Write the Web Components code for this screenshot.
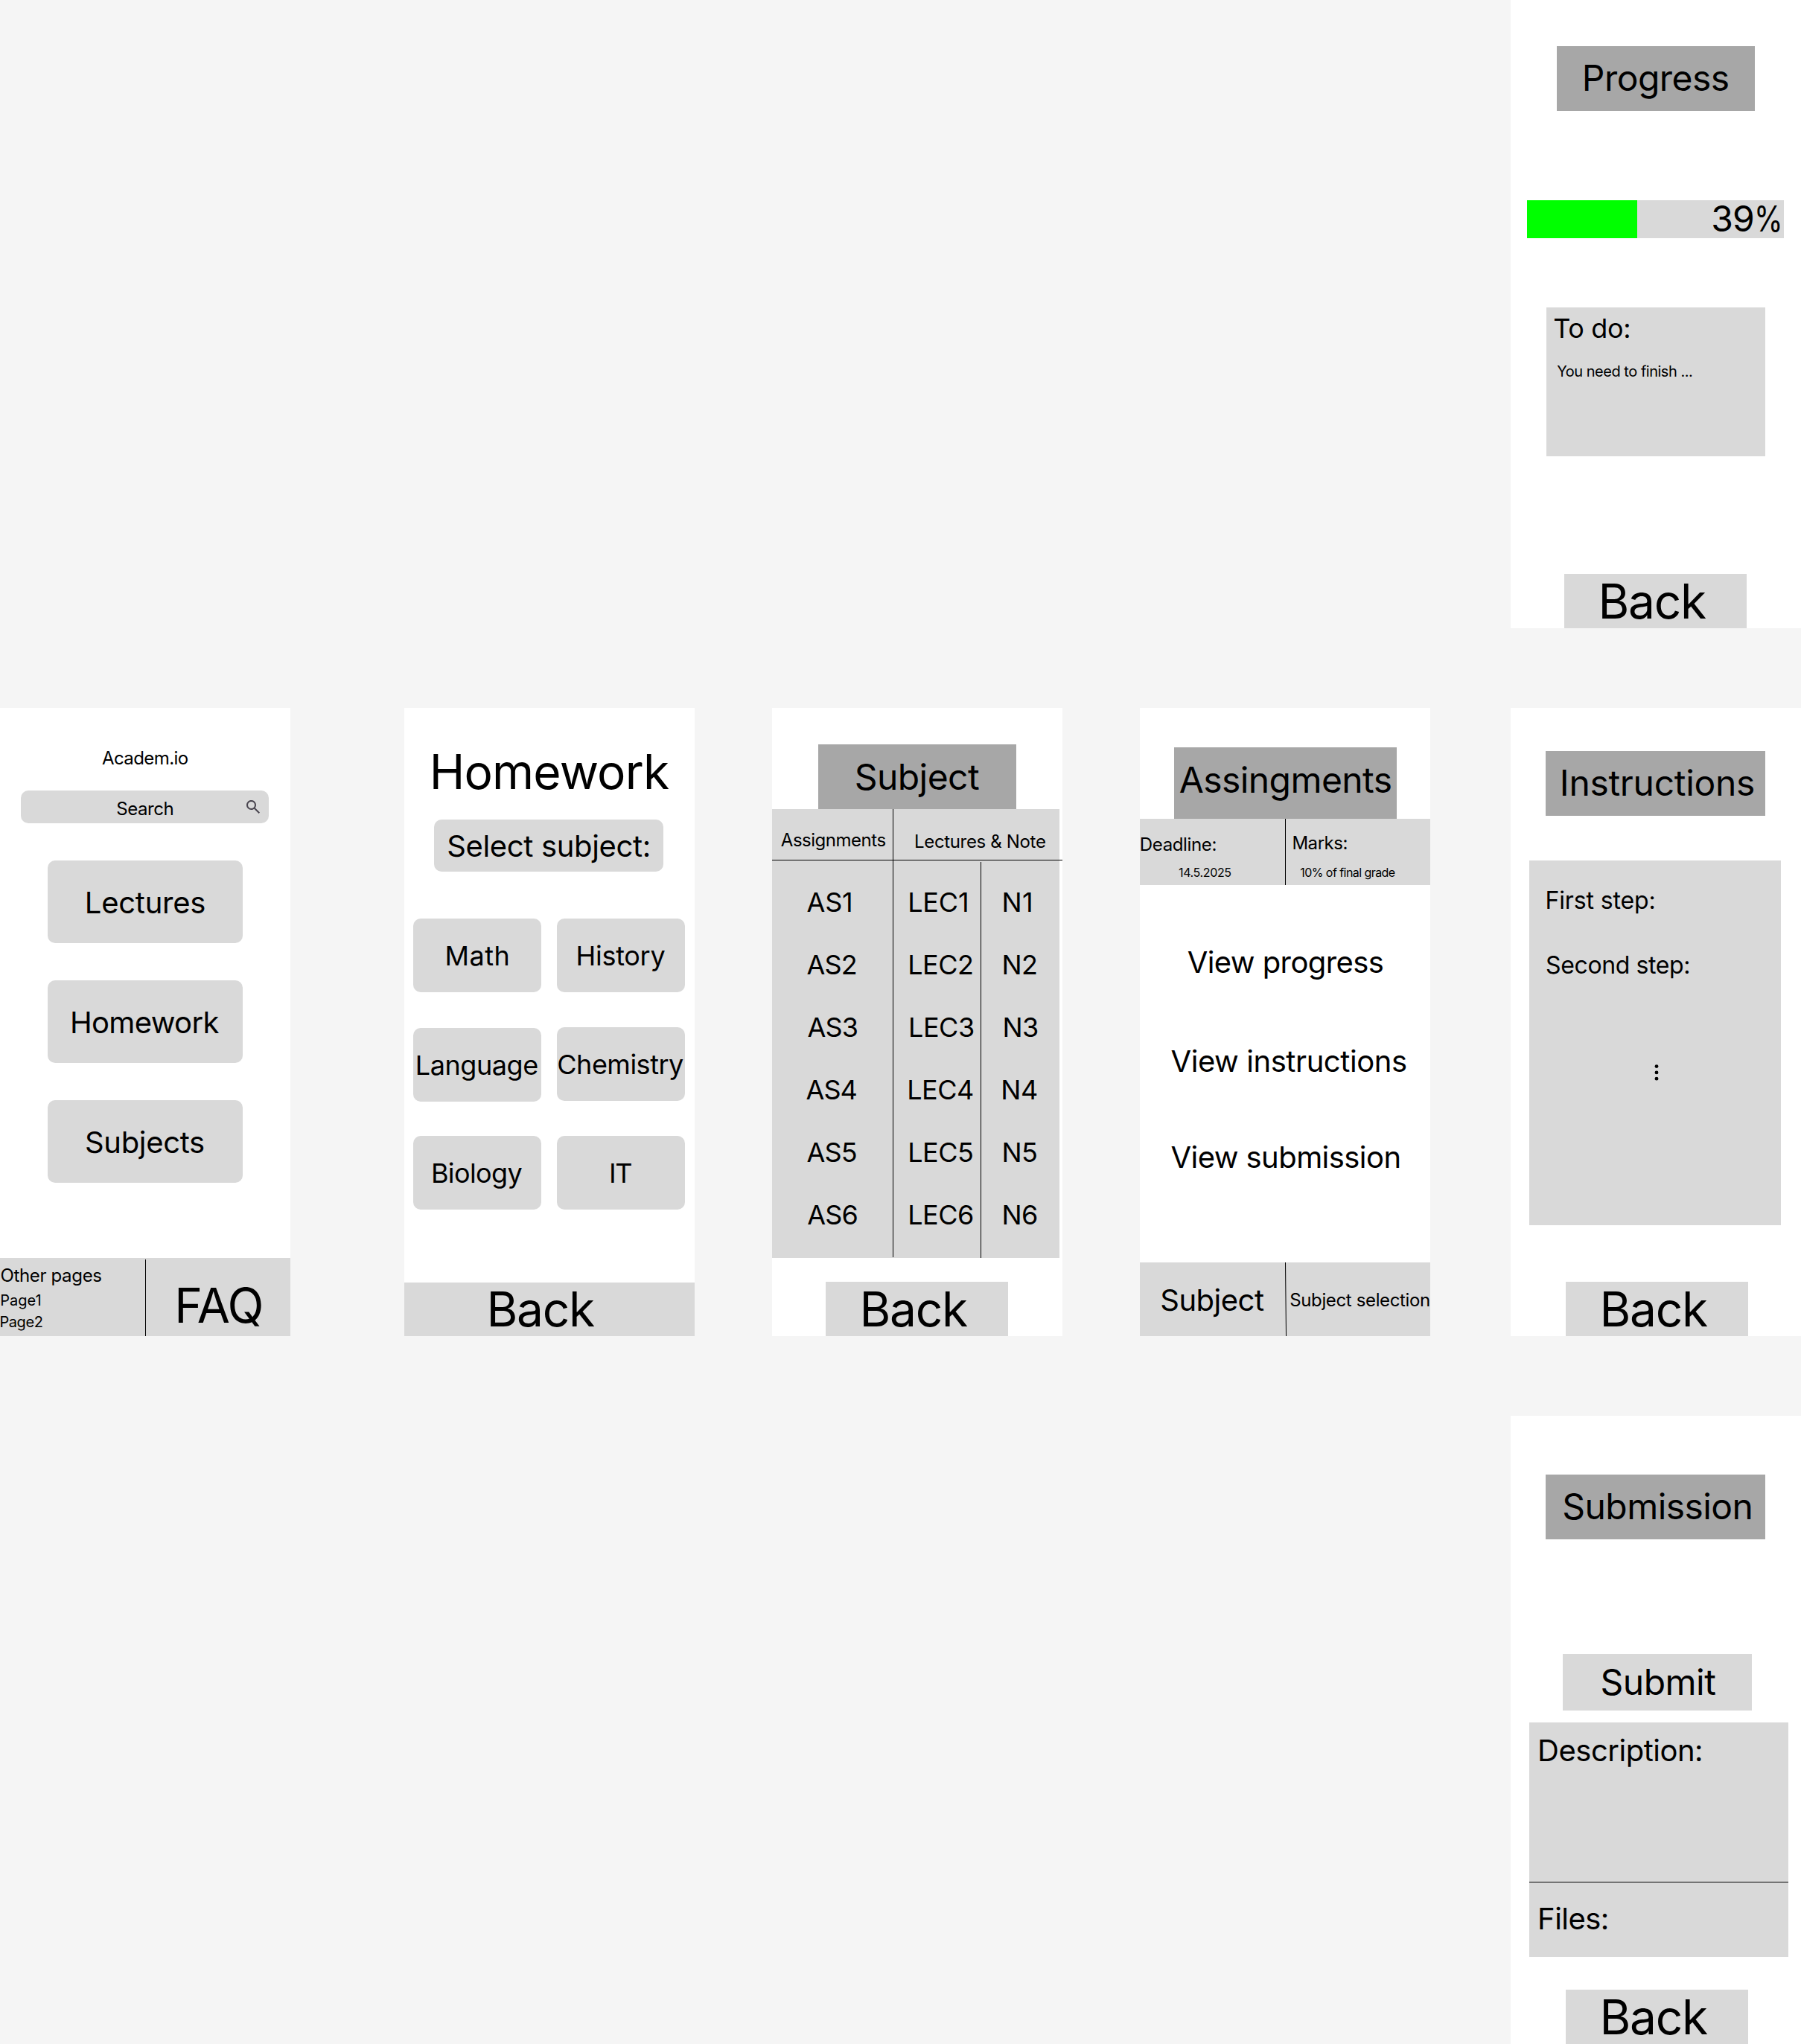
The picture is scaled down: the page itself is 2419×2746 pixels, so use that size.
<!DOCTYPE html>
<html lang="en">
<head>
<meta charset="utf-8">
<title>Academ.io wireframes</title>
<style>
  body { margin: 0; background: #f5f5f5; font-family: Inter, "Liberation Sans", sans-serif; color: #000; }
</style>
</head>
<body>
<wire-board></wire-board>
<script>
/* Layout numbers belong to one element only, so nested boxes must not inherit them */
for (const name of ['--w', '--h', '--t', '--l', '--b', '--s', '--k']) {
  CSS.registerProperty({ name, syntax: '<number>', inherits: false, initialValue: '0' });
}

const define = (name, html) => {
  const tpl = document.createElement('template');
  tpl.innerHTML = html;
  customElements.define(name, class extends HTMLElement {
    constructor() {
      super();
      this.attachShadow({ mode: 'open' }).append(tpl.content.cloneNode(true));
    }
  });
};

/* Text line: --s font size, --k tracking, --t / --l offset from the previous item */
define('wire-text', `<style>
  :host { display: block; flex: none; white-space: nowrap; line-height: normal;
    font-size: calc(var(--s) * 1px); letter-spacing: calc(var(--k) * 1px);
    margin: calc(var(--t) * 1px) 0 0 calc(var(--l) * 1px); }
</style><slot></slot>`);

/* Grey block: --w / --h size, --t / --l offset */
define('wire-box', `<style>
  :host { display: flex; flex-direction: column; align-items: flex-start; flex: none; box-sizing: border-box;
    background: #d9d9d9; width: calc(var(--w) * 1px); height: calc(var(--h) * 1px);
    margin: calc(var(--t) * 1px) 0 0 calc(var(--l) * 1px); }
  :host([row]) { flex-direction: row; }
  :host([round]) { border-radius: 10px; }
  :host([dark]) { background: #a7a7a7; }
  :host([clear]) { background: none; }
  :host([foot]) { margin-top: auto; }
</style><slot></slot>`);

/* Hairline */
define('wire-rule', `<style>
  :host { display: block; flex: none; background: #000; width: 1px; align-self: stretch;
    margin: calc(var(--t) * 1px) 0 calc(var(--b) * 1px); }
  :host([across]) { height: 1px; width: calc(var(--w) * 1px); align-self: flex-start; margin: 0; }
</style>`);

define('wire-screen', `<style>
  :host { display: flex; flex-direction: column; align-items: flex-start; background: #fff; width: 390px; height: 844px; }
</style><slot></slot>`);

define('back-button', `<style>
  :host { display: block; margin-top: auto; margin-left: calc(var(--l) * 1px); }
</style>
<wire-box style="--w:245;--h:73"><wire-text style="--s:64;--k:-1.26;--t:-2;--l:45.4">Back</wire-text></wire-box>`);

define('search-icon', `<style>:host { display: block; margin: 10px 9px 0 auto; width: 24px; height: 24px; } svg { display: block; }</style>
<svg width="24" height="24" viewBox="0 0 24 24"><path fill="#49454f" d="M19.6 21L13.3 14.7C12.8 15.1 12.225 15.4167 11.575 15.65C10.925 15.8833 10.2333 16 9.5 16C7.68333 16 6.14583 15.3708 4.8875 14.1125C3.62917 12.8542 3 11.3167 3 9.5C3 7.68333 3.62917 6.14583 4.8875 4.8875C6.14583 3.62917 7.68333 3 9.5 3C11.3167 3 12.8542 3.62917 14.1125 4.8875C15.3708 6.14583 16 7.68333 16 9.5C16 10.2333 15.8833 10.925 15.65 11.575C15.4167 12.225 15.1 12.8 14.7 13.3L21 19.6L19.6 21ZM9.5 14C10.75 14 11.8125 13.5625 12.6875 12.6875C13.5625 11.8125 14 10.75 14 9.5C14 8.25 13.5625 7.1875 12.6875 6.3125C11.8125 5.4375 10.75 5 9.5 5C8.25 5 7.1875 5.4375 6.3125 6.3125C5.4375 7.1875 5 8.25 5 9.5C5 10.75 5.4375 11.8125 6.3125 12.6875C7.1875 13.5625 8.25 14 9.5 14Z"/></svg>`);

define('more-dots', `<style>:host { display: block; margin: 113px 0 0 168.3px; } svg { display: block; }</style>
<svg width="6" height="24" viewBox="0 0 6 24"><circle cx="3" cy="3.6" r="2.4"/><circle cx="3" cy="11.9" r="2.4"/><circle cx="3" cy="20.2" r="2.4"/></svg>`);

define('home-screen', `<wire-screen>
  <wire-text style="--s:24;--k:-.57;--t:53;--l:136.9">Academ.io</wire-text>
  <wire-box row round style="--w:333;--h:44;--t:29;--l:28">
    <wire-text style="--s:24;--k:-.42;--t:10;--l:128.2">Search</wire-text><search-icon></search-icon>
  </wire-box>
  <wire-box round style="--w:262;--h:111;--t:50;--l:64"><wire-text style="--s:40;--k:-.26;--t:32;--l:49.8">Lectures</wire-text></wire-box>
  <wire-box round style="--w:262;--h:111;--t:50;--l:64"><wire-text style="--s:40;--k:-.64;--t:32;--l:29.9">Homework</wire-text></wire-box>
  <wire-box round style="--w:262;--h:111;--t:50;--l:64"><wire-text style="--s:40;--k:-.32;--t:32;--l:50">Subjects</wire-text></wire-box>
  <wire-box row foot style="--w:390;--h:105">
    <wire-box clear style="--w:195;--h:105">
      <wire-text style="--s:24;--k:-.34;--t:9;--l:.4">Other pages</wire-text>
      <wire-text style="--s:20;--t:7;--l:.3">Page1</wire-text>
      <wire-text style="--s:20;--k:-.4;--t:5;--l:-.6">Page2</wire-text>
    </wire-box>
    <wire-rule style="--t:2"></wire-rule>
    <wire-text style="--s:64;--k:-1.3;--t:25;--l:38.2">FAQ</wire-text>
  </wire-box>
</wire-screen>`);

define('homework-screen', `<style>.cols { display: flex; gap: 21px; margin: 63px 0 0 12px; } .cols > div { display: flex; flex-direction: column; }</style>
<wire-screen>
  <wire-text style="--s:64;--k:-.8;--t:47;--l:33.7">Homework</wire-text>
  <wire-box round style="--w:308;--h:70;--t:26;--l:40"><wire-text style="--s:40;--k:-.35;--t:11;--l:17.2">Select subject:</wire-text></wire-box>
  <div class="cols">
    <div>
      <wire-box round style="--w:172;--h:99"><wire-text style="--s:36;--k:.5;--t:28;--l:42.5">Math</wire-text></wire-box>
      <wire-box round style="--w:172;--h:99;--t:48"><wire-text style="--s:36;--k:-.45;--t:28;--l:2.8">Language</wire-text></wire-box>
      <wire-box round style="--w:172;--h:99;--t:46"><wire-text style="--s:36;--k:-.62;--t:28;--l:23.9">Biology</wire-text></wire-box>
    </div>
    <div>
      <wire-box round style="--w:172;--h:99"><wire-text style="--s:36;--k:-.28;--t:28;--l:25.5">History</wire-text></wire-box>
      <wire-box round style="--w:172;--h:99;--t:47"><wire-text style="--s:36;--k:-.5;--t:28;--l:.3">Chemistry</wire-text></wire-box>
      <wire-box round style="--w:172;--h:99;--t:47"><wire-text style="--s:36;--k:-1.4;--t:28;--l:70">IT</wire-text></wire-box>
    </div>
  </div>
  <wire-box foot style="--w:390;--h:72"><wire-text style="--s:64;--k:-1.26;--t:-3;--l:110.5">Back</wire-text></wire-box>
</wire-screen>`);

define('subject-screen', `<style>.col { display: flex; flex-direction: column; gap: 40px; padding-top: 34px; box-sizing: border-box; } .as { width: 162px; } .lec { width: 117px; } .note { width: 105px; }</style>
<wire-screen>
  <wire-box dark style="--w:266;--h:87;--t:49;--l:62"><wire-text style="--s:48;--k:-.56;--t:14;--l:48.7">Subject</wire-text></wire-box>
  <wire-box style="--w:386;--h:603">
    <wire-box clear row style="--w:386;--h:68">
      <wire-box clear style="--w:162;--h:68"><wire-text style="--s:24;--k:-.48;--t:27;--l:11.8">Assignments</wire-text></wire-box>
      <wire-rule></wire-rule>
      <wire-text style="--s:24;--k:-.34;--t:29;--l:28">Lectures &amp; Note</wire-text>
    </wire-box>
    <wire-rule across style="--w:390"></wire-rule>
    <wire-box clear row style="--w:386;--h:534">
      <div class="col as">
        <wire-text style="--s:36;--k:-.2;--l:46.5">AS1</wire-text>
        <wire-text style="--s:36;--k:-.9;--l:46.6">AS2</wire-text>
        <wire-text style="--s:36;--k:-.8;--l:47.5">AS3</wire-text>
        <wire-text style="--s:36;--k:-1;--l:45.6">AS4</wire-text>
        <wire-text style="--s:36;--k:-.9;--l:46.6">AS5</wire-text>
        <wire-text style="--s:36;--k:-.8;--l:47.2">AS6</wire-text>
      </div>
      <wire-rule style="--b:1"></wire-rule>
      <div class="col lec">
        <wire-text style="--s:36;--k:-.2;--l:19.2">LEC1</wire-text>
        <wire-text style="--s:36;--k:-.5;--l:19.2">LEC2</wire-text>
        <wire-text style="--s:36;--k:-.5;--l:20.1">LEC3</wire-text>
        <wire-text style="--s:36;--k:-.5;--l:18.2">LEC4</wire-text>
        <wire-text style="--s:36;--k:-.5;--l:19.2">LEC5</wire-text>
        <wire-text style="--s:36;--k:-.5;--l:19.2">LEC6</wire-text>
      </div>
      <wire-rule style="--t:2"></wire-rule>
      <div class="col note">
        <wire-text style="--s:36;--k:.6;--l:27.4">N1</wire-text>
        <wire-text style="--s:36;--k:-.4;--l:27.4">N2</wire-text>
        <wire-text style="--s:36;--k:-.4;--l:28.4">N3</wire-text>
        <wire-text style="--s:36;--k:-.4;--l:26.3">N4</wire-text>
        <wire-text style="--s:36;--k:-.4;--l:27.4">N5</wire-text>
        <wire-text style="--s:36;--k:-.4;--l:27.4">N6</wire-text>
      </div>
    </wire-box>
  </wire-box>
  <back-button style="--l:72"></back-button>
</wire-screen>`);

define('assignments-screen', `<style>svg { display: block; flex: none; }</style>
<wire-screen>
  <wire-box dark style="--w:299;--h:96;--t:53;--l:46"><wire-text style="--s:48;--k:-.58;--t:14;--l:6.7">Assingments</wire-text></wire-box>
  <wire-box row style="--w:390;--h:89">
    <wire-box clear style="--w:195;--h:89">
      <wire-text style="--s:24;--k:-.36;--t:20;--l:-.2">Deadline:</wire-text>
      <wire-text style="--s:16;--k:-.36;--t:13;--l:52">14.5.2025</wire-text>
    </wire-box>
    <wire-rule></wire-rule>
    <wire-box clear style="--w:194;--h:89">
      <wire-text style="--s:24;--k:-.45;--t:18;--l:8.4">Marks:</wire-text>
      <wire-text style="--s:16;--k:-.56;--t:15;--l:19.3">10% of final grade</wire-text>
    </wire-box>
  </wire-box>
  <wire-text style="--s:40;--k:-.58;--t:79;--l:63.7">View progress</wire-text>
  <wire-text style="--s:40;--k:-.43;--t:84;--l:41.5">View instructions</wire-text>
  <wire-text style="--s:40;--k:-.56;--t:80;--l:41.5">View submission</wire-text>
  <wire-box row foot style="--w:390;--h:99">
    <wire-box clear style="--w:195;--h:99"><wire-text style="--s:40;--k:-.5;--t:26;--l:27.3">Subject</wire-text></wire-box>
    <svg width="2" height="99"><path d="M.5 0L1.5 99" stroke="#000"/></svg>
    <wire-text style="--s:24;--k:-.36;--t:36;--l:4.2">Subject selection</wire-text>
  </wire-box>
</wire-screen>`);

define('progress-screen', `<style>
  .pct { display: inline-block; transform: scaleX(.82); transform-origin: 0 50%; letter-spacing: 0; }
</style>
<wire-screen>
  <wire-box dark style="--w:266;--h:87;--t:62;--l:62"><wire-text style="--s:48;--k:-.53;--t:13;--l:33.8">Progress</wire-text></wire-box>
  <wire-box row style="--w:345;--h:51;--t:120;--l:22">
    <wire-box style="--w:148;--h:51;background:#0f0"></wire-box>
    <wire-text style="--s:48;--k:-.8;--t:-5;--l:99.2">39<span class="pct">%</span></wire-text>
  </wire-box>
  <wire-box style="--w:294;--h:200;--t:93;--l:48">
    <wire-text style="--s:36;--k:-.35;--t:6;--l:9.2">To do:</wire-text>
    <wire-text style="--s:20;--k:-.48;--t:24;--l:14.2">You need to finish ...</wire-text>
  </wire-box>
  <back-button style="--l:72"></back-button>
</wire-screen>`);

define('instructions-screen', `<wire-screen>
  <wire-box dark style="--w:295;--h:87;--t:58;--l:47"><wire-text style="--s:48;--k:-.31;--t:13;--l:18.8">Instructions</wire-text></wire-box>
  <wire-box style="--w:338;--h:490;--t:60;--l:25">
    <wire-text style="--s:32;--k:-.14;--t:34;--l:21.5">First step:</wire-text>
    <wire-text style="--s:32;--k:-.39;--t:48;--l:22.1">Second step:</wire-text>
    <more-dots></more-dots>
  </wire-box>
  <back-button style="--l:74"></back-button>
</wire-screen>`);

define('submission-screen', `<wire-screen>
  <wire-box dark style="--w:295;--h:87;--t:79;--l:47"><wire-text style="--s:48;--k:-.56;--t:13;--l:22.3">Submission</wire-text></wire-box>
  <wire-box style="--w:254;--h:76;--t:154;--l:70"><wire-text style="--s:48;--k:-.54;--t:8;--l:50.6">Submit</wire-text></wire-box>
  <wire-box style="--w:348;--h:315;--t:16;--l:25">
    <wire-box clear style="--w:348;--h:214"><wire-text style="--s:40;--k:-.49;--t:13;--l:11.1">Description:</wire-text></wire-box>
    <wire-rule across style="--w:348"></wire-rule>
    <wire-box clear style="--w:348;--h:100"><wire-text style="--s:40;--k:-.55;--t:24;--l:11.1">Files:</wire-text></wire-box>
  </wire-box>
  <back-button style="--l:74"></back-button>
</wire-screen>`);

define('wire-board', `<style>
  :host { display: grid; width: 2419px; height: 2746px; overflow: hidden;
    grid-template-columns: 543px 494px 494px 498px 390px; grid-template-rows: 951px 951px 844px; }
  .end { grid-column: 5; }
</style>
<progress-screen class="end"></progress-screen>
<home-screen></home-screen>
<homework-screen></homework-screen>
<subject-screen></subject-screen>
<assignments-screen></assignments-screen>
<instructions-screen></instructions-screen>
<submission-screen class="end"></submission-screen>`);
</script>
</body>
</html>
